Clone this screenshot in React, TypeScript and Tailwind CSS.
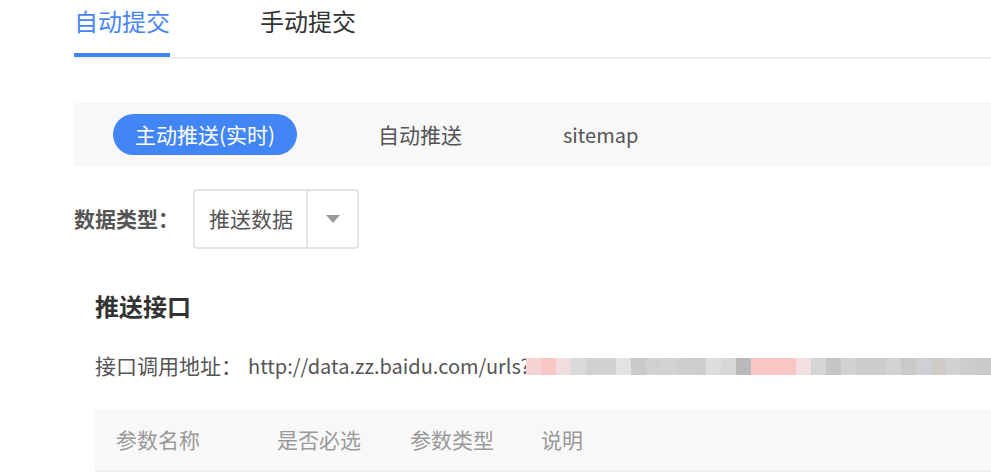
import React from "react";

const blur = [
  "#f5d3d3", "#f9c6c6", "#f0dddd", "#dadada", "#d1d1d1", "#d1d1d1", "#e3e3e3", "#c9c9c9",
  "#d1d1d1", "#d3d3d3", "#cfcfcf", "#cecece", "#dddddd", "#d8d8d8", "#b9b9b9", "#fbc6c6",
  "#f9c6c6", "#f9c6c6", "#f3e1e1", "#d5d5d5", "#c5c5c5", "#d1d1d1", "#cdcdcd", "#cdcdcd",
  "#d3d3d3", "#c9c9c9", "#ced0d3", "#cecbc8", "#d1d1d1", "#cfcdcb", "#c9c9c9", "#cccccc",
];

export default function App() {
  return (
    <div
      className="w-[991px] h-[472px] overflow-hidden bg-white pl-[74px]"
      style={{ fontFamily: '"Noto Sans CJK SC", "Noto Sans", sans-serif' }}
    >
      {/* top tabs */}
      <div className="flex border-b-2 border-[#eeeeee]">
        <div className="h-[57px] pt-[7px] text-[24px] leading-[28px] text-[#4a85f6] border-b-4 border-[#4285f4]">
          自动提交
        </div>
        <div className="ml-[90px] h-[57px] pt-[7px] text-[24px] leading-[28px] text-[#333333]">
          手动提交
        </div>
      </div>

      {/* sub tabs */}
      <div className="mt-[44px] h-[63px] bg-[#f8f8f8] flex items-center pl-[39px]">
        <div className="h-[41px] w-[184px] rounded-full bg-[#4285f4] text-white text-[21px] flex items-center justify-center">
          主动推送(实时)
        </div>
        <div className="ml-[81px] text-[21px] text-[#555555]">自动推送</div>
        <div className="ml-[101px] text-[20px] text-[#555555]">sitemap</div>
      </div>

      {/* data type */}
      <div className="mt-[23px] flex items-center">
        <div className="w-[119px] text-[21px] font-bold text-[#555555]">数据类型：</div>
        <div className="h-[60px] w-[166px] flex border-2 border-[#e3e3e3] rounded-[4px]">
          <div className="w-[113px] flex items-center pl-[14px] text-[21px] text-[#555555] border-r-2 border-[#e3e3e3]">
            推送数据
          </div>
          <div className="flex-1 flex items-center justify-center">
            <svg width="14" height="8" viewBox="0 0 14 8">
              <polygon points="0,0 14,0 7,8" fill="#999999" />
            </svg>
          </div>
        </div>
      </div>

      <div className="pl-[21px]">
        <div className="mt-[40px] text-[24px] leading-[34px] font-bold text-[#333333]">推送接口</div>

        <div className="mt-[26px] flex items-center h-[34px] text-[20px] text-[#555555] whitespace-nowrap">
          <span className="text-[21px]">接口调用地址：</span>
          <span className="ml-[6px]">http://data.zz.baidu.com/urls?</span>
          <div className="flex h-[17px] -ml-[4px]">
            {blur.map((c, i) => (
              <div key={i} className="w-[15px] h-full" style={{ backgroundColor: c }} />
            ))}
          </div>
        </div>

        <div className="mt-[27px] h-[62px] bg-[#f8f8f8] border-b-2 border-[#efefef] flex items-center text-[21px] text-[#999999]">
          <span className="ml-[21px]">参数名称</span>
          <span className="ml-[77px]">是否必选</span>
          <span className="ml-[49px]">参数类型</span>
          <span className="ml-[47px]">说明</span>
        </div>
      </div>
    </div>
  );
}
